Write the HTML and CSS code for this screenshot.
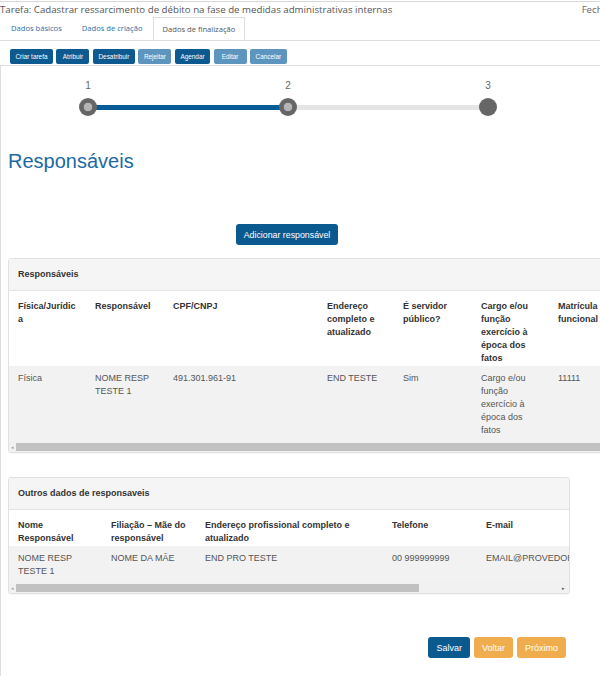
FILE: index.html
```html
<!DOCTYPE html>
<html lang="pt-BR">
<head>
    <meta charset="UTF-8">
    <meta name="viewport" content="width=device-width, initial-scale=1.0">
    <title>Tarefa - Dados de finalização</title>
    <link rel="stylesheet" href="styles.css">
</head>
<body>

    <div class="topo"></div>

    <!-- Cabeçalho da tarefa -->
    <div class="tarefa-titulo">
        <span>Tarefa: Cadastrar ressarcimento de débito na fase de medidas administrativas internas</span>
        <a class="fechar">Fechar</a>
    </div>

    <ul class="abas">
        <li><a>Dados básicos</a></li>
        <li><a>Dados de criação</a></li>
        <li class="ativa"><a>Dados de finalização</a></li>
    </ul>

    <div class="acoes">
        <button class="btn-acao">Criar tarefa</button>
        <button class="btn-acao">Atribuir</button>
        <button class="btn-acao">Desatribuir</button>
        <button class="btn-acao inativo">Rejeitar</button>
        <button class="btn-acao">Agendar</button>
        <button class="btn-acao inativo">Editar</button>
        <button class="btn-acao inativo">Cancelar</button>
    </div>

    <div class="conteudo">

        <!-- Etapas do formulário -->
        <div class="etapas">
            <span class="num n1">1</span>
            <span class="num n2">2</span>
            <span class="num n3">3</span>
            <span class="ponto feito"></span>
            <span class="linha feita"></span>
            <span class="ponto feito"></span>
            <span class="linha"></span>
            <span class="ponto"></span>
        </div>

        <h2 class="titulo-secao">Responsáveis</h2>

        <div class="centro">
            <button class="btn btn-azul">Adicionar responsável</button>
        </div>

        <!-- Tabela de responsáveis -->
        <div class="painel painel-largo">
            <div class="painel-cab">Responsáveis</div>
            <div class="rolagem">
                <table class="tabela tab-resp">
                    <colgroup>
                        <col><col><col><col><col><col><col>
                    </colgroup>
                    <thead>
                        <tr>
                            <th>Física/Jurídica</th>
                            <th>Responsável</th>
                            <th>CPF/CNPJ</th>
                            <th>Endereço completo e atualizado</th>
                            <th>É servidor público?</th>
                            <th>Cargo e/ou função exercício à época dos fatos</th>
                            <th>Matrícula funcional</th>
                        </tr>
                    </thead>
                    <tbody>
                        <tr>
                            <td>Física</td>
                            <td>NOME RESP TESTE 1</td>
                            <td>491.301.961-91</td>
                            <td>END TESTE</td>
                            <td>Sim</td>
                            <td>Cargo e/ou função exercício à época dos fatos</td>
                            <td>11111</td>
                        </tr>
                    </tbody>
                </table>
            </div>
            <div class="barra">
                <span class="seta">&#9666;</span>
                <span class="polegar polegar-cheio"></span>
            </div>
        </div>

        <!-- Outros dados -->
        <div class="painel painel-outros">
            <div class="painel-cab">Outros dados de responsaveis</div>
            <div class="rolagem">
                <table class="tabela tab-outros">
                    <colgroup>
                        <col><col><col><col><col>
                    </colgroup>
                    <thead>
                        <tr>
                            <th>Nome Responsável</th>
                            <th>Filiação – Mãe do responsável</th>
                            <th>Endereço profissional completo e atualizado</th>
                            <th>Telefone</th>
                            <th>E-mail</th>
                        </tr>
                    </thead>
                    <tbody>
                        <tr>
                            <td>NOME RESP TESTE 1</td>
                            <td>NOME DA MÃE</td>
                            <td>END PRO TESTE</td>
                            <td>00 999999999</td>
                            <td>EMAIL@PROVEDOR.COM.BR</td>
                        </tr>
                    </tbody>
                </table>
            </div>
            <div class="barra">
                <span class="seta">&#9666;</span>
                <span class="polegar polegar-parcial"></span>
                <span class="seta seta-dir">&#9656;</span>
            </div>
        </div>

        <div class="rodape">
            <button class="btn btn-azul">Salvar</button>
            <button class="btn btn-laranja">Voltar</button>
            <button class="btn btn-laranja">Próximo</button>
        </div>

    </div>

</body>
</html>
```

FILE: styles.css
```css
body { margin: 0; width: 600px; height: 676px; overflow: hidden; background: #fff; font-family: "Liberation Sans", Arial, sans-serif; color: #555; }
.topo { height: 1px; border-bottom: 1px solid #d8d8d8; }
.tarefa-titulo { display: flex; justify-content: space-between; width: 612px; height: 15px; font-family: "Open Sans", sans-serif; font-size: 9.7px; line-height: 15px; color: #555; white-space: nowrap; }
.fechar { color: #666; }

/* abas */
.abas { display: flex; list-style: none; margin: 0; padding: 0 0 0 1px; height: 23px; border-bottom: 1px solid #ddd; font-family: "Open Sans", sans-serif; font-size: 7.6px; }
.abas li { display: flex; }
.abas a { display: block; padding: 0 10px; line-height: 23px; color: #2d6fa8; }
.abas li.ativa a { color: #555; background: #fff; border: 1px solid #ddd; border-bottom-color: #fff; line-height: 22px; height: 23px; box-sizing: border-box; margin-bottom: -1px; padding: 0 9px; }

/* barra de ações */
.acoes { display: flex; gap: 3.5px; padding: 8px 10px 1px; border-bottom: 1px solid #ddd; }
.btn-acao { height: 15px; min-width: 33px; padding: 0 5.5px; border: none; border-radius: 2px; background: #0c5a8f; color: #fff; font-family: "Liberation Sans", Arial, sans-serif; font-size: 6.4px; cursor: pointer; }
.btn-acao.inativo { background: #5d95bf; }

.conteudo { border-left: 1px solid #ddd; padding: 13px 0 0 7px; height: 600px; }

/* etapas */
.etapas { display: grid; grid-template-columns: 18px 182px 18px 182px 18px; grid-template-rows: 13px 18px; row-gap: 6px; margin-left: 71px; align-items: center; }
.num { grid-row: 1; text-align: center; font-size: 10px; line-height: 13px; color: #666; }
.n1 { grid-column: 1; }
.n2 { grid-column: 3; }
.n3 { grid-column: 5; }
.ponto { grid-row: 2; width: 18px; height: 18px; border-radius: 50%; background: #666; position: relative; z-index: 1; }
.ponto.feito { background: radial-gradient(circle, #b4b4b4 0 4px, #666 4.6px); }
.linha { grid-row: 2; height: 5px; background: #e5e5e5; margin: 0 -2px; }
.linha.feita { background: #065c96; }

.titulo-secao { margin: 33px 0 0; font-weight: normal; font-size: 20px; line-height: 24px; color: #1c69a4; }

.centro { display: flex; justify-content: center; width: 558px; margin: 51px 0 13px; }
.btn { height: 21px; padding: 0 8px; border: none; border-radius: 3px; color: #fff; font-family: "Liberation Sans", Arial, sans-serif; font-size: 8.8px; cursor: pointer; }
.btn-azul { background: #0b5a8f; }
.btn-laranja { background: #f0ad4e; }

/* painéis com tabela */
.painel { border: 1px solid #e1e1e1; border-radius: 3px; background: #fff; overflow: hidden; box-shadow: 0 1px 1px rgba(0, 0, 0, 0.04); }
.painel-largo { width: 620px; }
.painel-outros { width: 560px; margin-top: 24px; }
.painel-cab { background: #f5f5f5; border-bottom: 1px solid #e4e4e4; padding: 10px 9px; font-size: 9px; line-height: 11px; font-weight: bold; color: #333; }
.rolagem { overflow: hidden; }
.tabela { border-collapse: collapse; table-layout: fixed; font-size: 9px; line-height: 13px; }
.tabela th { text-align: left; vertical-align: top; padding: 9px 9px 1px; color: #333; background: #fff; overflow-wrap: break-word; }
.tabela td { vertical-align: top; padding: 6px 9px 4px; color: #555; background: #f2f2f2; }
.tab-outros td:last-child { white-space: nowrap; }

/* larguras das colunas */
.tab-resp { width: 630px; }
.tab-resp col:nth-child(1) { width: 77px; }
.tab-resp col:nth-child(2) { width: 78px; }
.tab-resp col:nth-child(3) { width: 154px; }
.tab-resp col:nth-child(4) { width: 76px; }
.tab-resp col:nth-child(5) { width: 78px; }
.tab-resp col:nth-child(6) { width: 77px; }
.tab-resp col:nth-child(7) { width: 90px; }
.tab-outros { width: 618px; }
.tab-outros col:nth-child(1) { width: 93px; }
.tab-outros col:nth-child(2) { width: 94px; }
.tab-outros col:nth-child(3) { width: 187px; }
.tab-outros col:nth-child(4) { width: 94px; }
.tab-outros col:nth-child(5) { width: 150px; }

/* barra de rolagem */
.barra { display: flex; align-items: center; height: 11px; background: #f1f1f1; }
.seta { width: 7px; text-align: center; font-size: 5px; color: #a3a3a3; }
.seta-dir { margin-left: auto; width: 12px; color: #555; }
.polegar { height: 8px; background: #c1c1c1; }
.polegar-cheio { flex: 1; }
.polegar-parcial { width: 403px; }

.rodape { display: flex; justify-content: flex-end; gap: 4px; width: 558px; margin-top: 43px; }
.rodape .btn { font-size: 9px; }
```
